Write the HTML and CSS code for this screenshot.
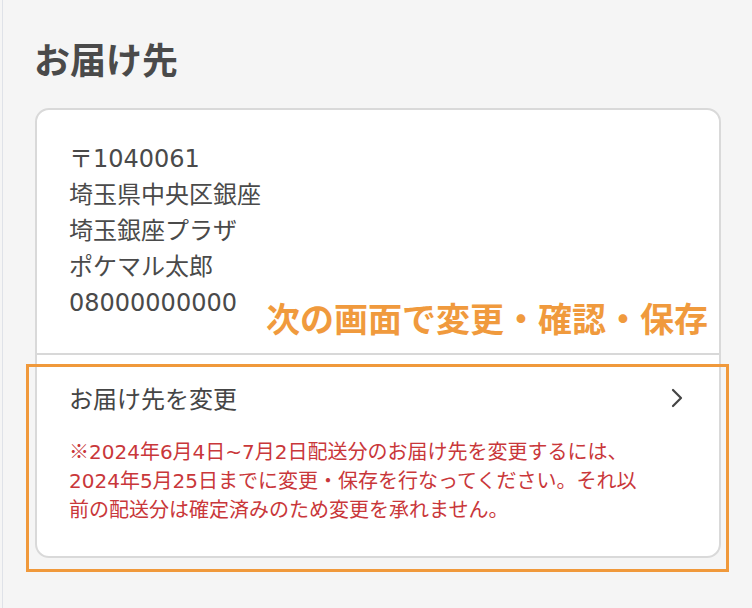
FILE: index.html
```html
<!DOCTYPE html>
<html lang="ja">
<head>
<meta charset="utf-8">
<link rel="stylesheet" href="styles.css">
</head>
<body>
<div class="page">
  <h1 class="title">お届け先</h1>
  <div class="card">
    <div class="address">
      <div class="line">〒1040061</div>
      <div class="line">埼玉県中央区銀座</div>
      <div class="line">埼玉銀座プラザ</div>
      <div class="line">ポケマル太郎</div>
      <div class="line">08000000000</div>
    </div>
    <div class="change">
      <div class="change-row">
        <span class="change-label">お届け先を変更</span>
        <svg class="chevron" width="12" height="20" viewBox="0 0 12 20"><path d="M2 2 L10 10 L2 18" fill="none" stroke="#444" stroke-width="2.2" stroke-linecap="round" stroke-linejoin="round"/></svg>
      </div>
      <p class="notice"><span class="mark">※</span>2024年6月4日~7月2日配送分のお届け先を変更するには、<br>2024年5月25日までに変更・保存を行なってください。それ以<br>前の配送分は確定済みのため変更を承れません。</p>
    </div>
  </div>
  <div class="note">次の画面で変更・確認・保存</div>
  <div class="highlight"></div>
</div>
</body>
</html>
```

FILE: styles.css
```css
html, body {
  margin: 0;
  padding: 0;
  background: #f5f5f5;
}
body {
  font-family: "Noto Sans CJK JP", "Noto Sans", sans-serif;
  color: #4a4a4a;
  width: 752px;
  height: 608px;
  overflow: hidden;
}
.page {
  position: relative;
  height: 608px;
  box-sizing: border-box;
  padding: 37px 31px 0 32px;
  border-left: 1px solid #dfe2e8;
  margin-left: 2px;
}
.title {
  margin: 0 0 29px -1px;
  font-size: 36px;
  line-height: 42px;
  font-weight: 700;
  color: #4a4a4a;
}
.card {
  background: #fff;
  border: 2px solid #d9d9d9;
  border-radius: 14px;
}
.address {
  padding: 31px 32px 32px 32px;
  border-bottom: 2px solid #d8d8d8;
}
.line {
  font-family: "DejaVu Sans", "Noto Sans CJK JP", sans-serif;
  font-size: 24px;
  line-height: 36px;
  color: #4a4a4a;
}
.change {
  padding: 25px 35px 31px 32px;
}
.change-row {
  display: flex;
  align-items: center;
  justify-content: space-between;
  height: 36px;
}
.change-label {
  font-size: 24px;
  line-height: 36px;
  color: #454545;
}
.chevron {
  display: block;
  margin-right: 1px;
}
.notice {
  margin: 20px 0 0 0;
  font-family: "DejaVu Sans", "Noto Sans CJK JP", sans-serif;
  font-size: 20px;
  line-height: 29px;
  color: #c9373a;
}
.mark {
  font-family: "Noto Sans CJK JP", sans-serif;
}
.note {
  position: absolute;
  left: 263px;
  top: 298px;
  font-size: 34px;
  line-height: 40px;
  font-weight: 700;
  color: #f09a3d;
  white-space: nowrap;
}
.highlight {
  position: absolute;
  left: 23px;
  top: 364px;
  width: 697px;
  height: 202px;
  border: 3px solid #f0993b;
}
```
